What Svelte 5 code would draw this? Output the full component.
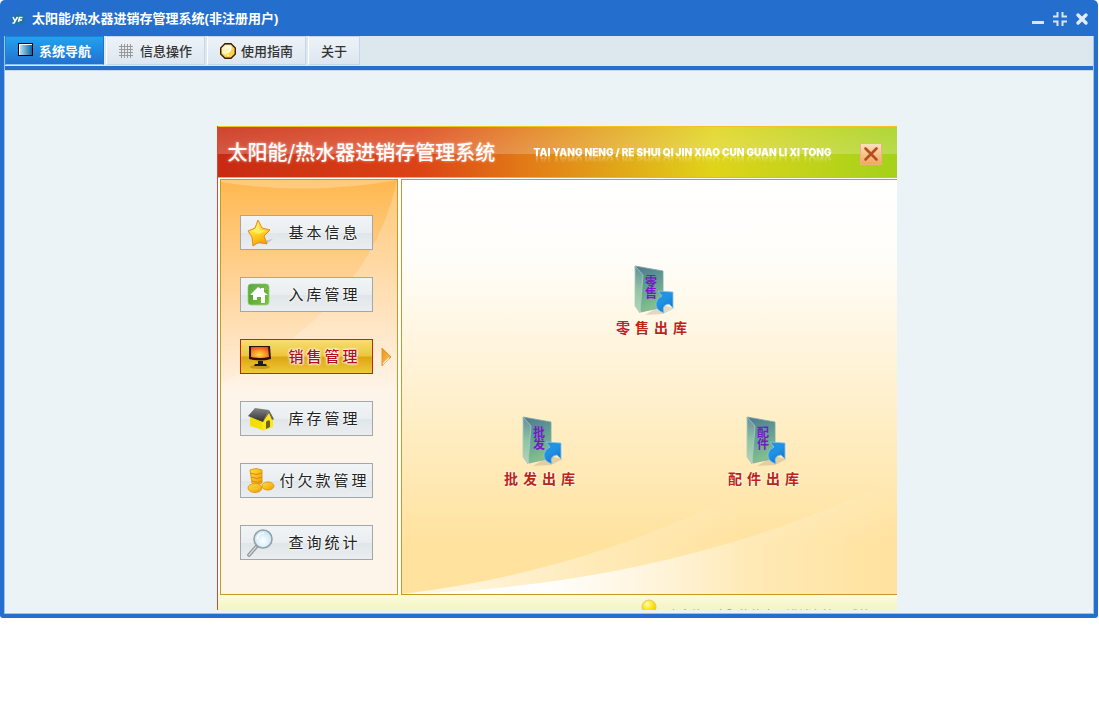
<script lang="ts">
	interface Tab {
		id: string;
		label: string;
		icon?: 'screen' | 'grid' | 'help';
	}

	interface MenuItem {
		id: string;
		label: string;
	}

	interface Shortcut {
		glyph: string[];
		label: string;
	}

	const tabs: Tab[] = [
		{ id: 'nav', label: '系统导航', icon: 'screen' },
		{ id: 'info', label: '信息操作', icon: 'grid' },
		{ id: 'guide', label: '使用指南', icon: 'help' },
		{ id: 'about', label: '关于' }
	];

	const menu: MenuItem[] = [
		{ id: 'star', label: '基本信息' },
		{ id: 'home', label: '入库管理' },
		{ id: 'monitor', label: '销售管理' },
		{ id: 'store', label: '库存管理' },
		{ id: 'coins', label: '付欠款管理' },
		{ id: 'search', label: '查询统计' }
	];

	const shortcuts: Shortcut[] = [
		{ glyph: ['零', '售'], label: '零售出库' },
		{ glyph: ['批', '发'], label: '批发出库' },
		{ glyph: ['配', '件'], label: '配件出库' }
	];

	let activeTab = $state('nav');
	let activeMenu = $state('monitor');
</script>

<!-- Shared gradients -->
<svg class="defs" width="0" height="0" aria-hidden="true">
	<defs>
		<linearGradient id="g-screen" x1="0" x2="1"><stop offset="0" stop-color="#b5dcf2" /><stop offset="1" stop-color="#0a659f" /></linearGradient>
		<linearGradient id="g-star" x1="0" y1="0" x2="0.4" y2="1"><stop offset="0" stop-color="#ffee50" /><stop offset="0.5" stop-color="#ffdf2a" /><stop offset="1" stop-color="#f6a800" /></linearGradient>
		<linearGradient id="g-home" x1="0" y1="0" x2="1" y2="1"><stop offset="0" stop-color="#46992c" /><stop offset="1" stop-color="#7cc63c" /></linearGradient>
		<radialGradient id="g-monitor" cx="0.45" cy="0.7" r="0.8"><stop offset="0" stop-color="#ffdc4a" /><stop offset="0.5" stop-color="#fb8f2c" /><stop offset="1" stop-color="#e8401c" /></radialGradient>
		<linearGradient id="g-roof" x1="0" y1="0" x2="0" y2="1"><stop offset="0" stop-color="#858585" /><stop offset="1" stop-color="#2f2f2f" /></linearGradient>
		<linearGradient id="g-coin" x1="0" y1="0" x2="1" y2="1"><stop offset="0" stop-color="#ffe23c" /><stop offset="1" stop-color="#f09a08" /></linearGradient>
		<radialGradient id="g-lens" cx="0.5" cy="0.6" r="0.6"><stop offset="0" stop-color="#ffffff" /><stop offset="1" stop-color="#bfe4f5" /></radialGradient>
		<linearGradient id="g-folder" x1="0" y1="0" x2="0.3" y2="1"><stop offset="0" stop-color="#52758f" /><stop offset="0.45" stop-color="#5c9a92" /><stop offset="1" stop-color="#83c08b" /></linearGradient>
		<linearGradient id="g-flap" x1="0" y1="0" x2="0" y2="1"><stop offset="0" stop-color="#668da0" /><stop offset="0.5" stop-color="#8fc4a4" /><stop offset="1" stop-color="#b4d5bd" /></linearGradient>
		<linearGradient id="g-arrow" x1="0" y1="0" x2="0.6" y2="1"><stop offset="0" stop-color="#2f8fd4" /><stop offset="0.5" stop-color="#1e93e4" /><stop offset="1" stop-color="#1976cc" /></linearGradient>
		<linearGradient id="g-pointer" x1="0" y1="0" x2="1" y2="1"><stop offset="0" stop-color="#e9901c" /><stop offset="1" stop-color="#ffc766" /></linearGradient>
		<linearGradient id="g-sweep1" x1="0" x2="1"><stop offset="0" stop-color="#fff" /><stop offset="0.28" stop-color="#fff" stop-opacity="0.95" /><stop offset="0.7" stop-color="#fff" stop-opacity="0.25" /><stop offset="1" stop-color="#fff" stop-opacity="0" /></linearGradient>
		<linearGradient id="g-sweep2" x1="0" x2="1"><stop offset="0" stop-color="#fff" stop-opacity="0.8" /><stop offset="0.4" stop-color="#fff" stop-opacity="0.25" /><stop offset="0.7" stop-color="#fff" stop-opacity="0" /></linearGradient>
		<radialGradient id="g-bulb" cx="0.4" cy="0.3" r="0.7"><stop offset="0" stop-color="#fffbc4" /><stop offset="0.5" stop-color="#ffe913" /><stop offset="1" stop-color="#f5c400" /></radialGradient>
		<radialGradient id="g-logo"><stop offset="0" stop-color="#1d7b8b" /><stop offset="0.6" stop-color="#1c74a0" /><stop offset="1" stop-color="#246fcb" /></radialGradient>
	</defs>
</svg>

<div class="window">
	<header class="titlebar">
		<svg width="18" height="18" viewBox="0 0 18 18" aria-hidden="true">
			<ellipse cx="9.500" cy="9.500" rx="8" ry="6.500" fill="url(#g-logo)" />
			<path d="M4 7l2 4M8.500 7l-3.500 6H3.500M9.500 12l1-4.500h3M10 10h3" fill="none" stroke="#fff" stroke-width="1.600" />
		</svg>
		<h1>太阳能/热水器进销存管理系统(非注册用户)</h1>
		<div class="controls">
			<button aria-label="最小化">
				<svg width="14" height="14" viewBox="0 0 14 14"><path d="M1 10.500h12" stroke="#d6e6f8" stroke-width="3" /></svg>
			</button>
			<button aria-label="还原">
				<svg width="16" height="16" viewBox="0 0 16 16"><path d="M5.500 1v4.500H1M10.500 1v4.500H15M5.500 15v-4.500H1M10.500 15v-4.500H15" fill="none" stroke="#d6e6f8" stroke-width="2" /></svg>
			</button>
			<button aria-label="关闭">
				<svg width="14" height="14" viewBox="0 0 14 14"><path d="M3 3l8 8M11 3l-8 8" stroke="#e2edfa" stroke-width="3.400" stroke-linecap="round" /></svg>
			</button>
		</div>
	</header>

	<div class="frame">
		<nav class="tabs">
			{#each tabs as tab}
				<button class:active={activeTab === tab.id} onclick={() => (activeTab = tab.id)}>
					{#if tab.icon === 'screen'}
						<svg width="16" height="16" viewBox="0 0 16 16"><rect x="0" y="0" width="15" height="13" fill="#000" /><rect x="1" y="1" width="13" height="11" fill="#fff" /><rect x="2" y="2" width="12" height="10" fill="url(#g-screen)" /></svg>
					{:else if tab.icon === 'grid'}
						<svg width="16" height="16" viewBox="0 0 16 16"><path d="M2.500 1v14M5.500 1v14M8.500 1v14M11.500 1v14M0 3.500h14M0 6.500h14M0 9.500h14M0 12.500h14" stroke="#999" /></svg>
					{:else if tab.icon === 'help'}
						<svg width="16" height="16" viewBox="0 0 16 16">
							<path d="M5 0.700h6L15.300 5v6L11 15.300H5L0.700 11V5z" fill="#ffd24a" stroke="#3c1c08" stroke-width="1.400" />
							<path d="M5 2h6l1 2-2 5-5 3-3-2V5z" fill="#fff2b4" />
							<path d="M5.500 6c0-3 5-3 5 0 0 2-2.500 1.800-2.500 4M8 11.500v1.500" fill="none" stroke="#fff" stroke-width="1.800" />
						</svg>
					{/if}
					<span>{tab.label}</span>
				</button>
			{/each}
		</nav>

		<main class="workspace">
			<section class="panel">
				<header class="banner">
					<h2>太阳能/热水器进销存管理系统</h2>
					<p>TAI YANG NENG / RE SHUI QI JIN XIAO CUN GUAN LI XI TONG</p>
					<button class="close" aria-label="关闭导航">
						<svg width="16" height="16" viewBox="0 0 16 16"><path d="M2.500 2.500l11 11M13.500 2.500l-11 11" stroke="#b54d1c" stroke-width="2.600" stroke-linecap="round" /></svg>
					</button>
				</header>

				<div class="columns">
					<aside class="sidebar">
						<svg class="shine" viewBox="0 0 176 414" preserveAspectRatio="none" aria-hidden="true">
							<path d="M0 0h176Q88 16 0 2z" fill="#fff" opacity="0.25" />
							<path d="M176 0Q150 125 0 204V414H176z" fill="#fff" opacity="0.22" />
						</svg>
						<ul>
							{#each menu as item}
								<li>
									<button class:active={activeMenu === item.id} onclick={() => (activeMenu = item.id)}>
										<svg width="28" height="28" viewBox="0 0 28 28" aria-hidden="true">
											{#if item.id === 'star'}
												<path d="M17 22l9-2-7 5H9z" fill="#aeb5b9" opacity="0.7" />
												<path d="M11 1l4 8 8 2-6 6 3 8-8-2-6 4-1-9-4-6 7-3z" fill="url(#g-star)" stroke="#ef8420" stroke-linejoin="round" />
												<path d="M11 4l2 7 7 1-8 3-8-3 5-2z" fill="#fff69a" opacity="0.6" />
											{:else if item.id === 'home'}
												<rect x="1" y="3" width="21" height="21" rx="3" fill="url(#g-home)" stroke="#9bd07c" stroke-width="0.800" />
												<path d="M2 14V6q0-2 2-2h16q1 0 1 2v3Q12 9 2 14z" fill="#fff" opacity="0.12" />
												<path d="M3 14l8-8 3 2V7h3v4l4 3h-3v8h-4v-6h-4v3H6v-5z" fill="#fff" />
											{:else if item.id === 'monitor'}
												<ellipse cx="13" cy="24" rx="10" ry="2" fill="#8c6a0c" opacity="0.4" />
												<path d="M2 3h21l1 13q-11 3-22 0z" fill="#2c140c" />
												<path d="M4 4h17l1 10q-9 2-18 0z" fill="url(#g-monitor)" />
												<path d="M11 18h5v3h3l1 2H7l1-2h3z" fill="#1c1c1c" />
											{:else if item.id === 'store'}
												<path d="M3 12l13 3v10L3 21z" fill="#f5df00" />
												<path d="M15 16l7-10 4 8v8l-11 4z" fill="#ffe71c" />
												<path d="M19 17q2-3 4-1v6l-4 2z" fill="#6b6420" />
												<path d="M1 11L8 3l14 2-6 12z" fill="url(#g-roof)" />
												<path d="M22 5l5 9-2 1-3-7-6 9z" fill="#666" />
											{:else if item.id === 'coins'}
												<path d="M3 3q6-3 12 0v13q-6 3-10 0z" fill="url(#g-coin)" stroke="#e59a12" />
												<path d="M3 6q6 3 12 0M4 10q6 3 11 0M5 14q6 3 10 0" fill="none" stroke="#d98a10" />
												<ellipse cx="21" cy="19" rx="6" ry="4" fill="url(#g-coin)" stroke="#e59a12" />
												<ellipse cx="8" cy="21" rx="7" ry="4.500" fill="url(#g-coin)" stroke="#e59a12" />
												<ellipse cx="8" cy="20" rx="4" ry="2" fill="none" stroke="#f7c83a" />
											{:else}
												<path d="M10 17l-8 9" stroke="#8b9094" stroke-width="3.600" stroke-linecap="round" />
												<path d="M9 18l-7 8" stroke="#d9dcdf" stroke-width="1.400" stroke-linecap="round" />
												<circle cx="16" cy="10" r="9" fill="url(#g-lens)" stroke="#94a0a7" stroke-width="1.600" />
												<path d="M10 10q1-6 7-6" fill="none" stroke="#fff" stroke-width="1.500" />
											{/if}
										</svg>
										<span>{item.label}</span>
									</button>
									{#if activeMenu === item.id}
										<svg width="11" height="20" viewBox="0 0 11 20" aria-hidden="true"><path d="M1 1l9 9-9 9z" fill="url(#g-pointer)" stroke="#e59a2c" /><path d="M2 17l6-6" stroke="#fff" stroke-width="1.200" opacity="0.8" /></svg>
									{/if}
								</li>
							{/each}
						</ul>
					</aside>

					<div class="board">
						<svg class="sweep" viewBox="0 0 495 130" preserveAspectRatio="none" aria-hidden="true">
							<path d="M0 130Q190 108 370 14H495V130z" fill="url(#g-sweep2)" />
							<path d="M0 130Q270 122 495 15V130z" fill="url(#g-sweep1)" />
						</svg>
						<div class="shortcuts">
							{#each shortcuts as item}
								<button>
									<svg width="44" height="52" viewBox="1 0 44 52" aria-hidden="true">
										<path d="M30 40l14 3-12 6-18 1z" fill="#a99e78" opacity="0.35" />
										<path d="M4 1l28 5v36L10 47z" fill="url(#g-folder)" stroke="#7ba5a4" stroke-width="0.800" />
										<path d="M4 1l8 9-3 38-5-7z" fill="url(#g-flap)" stroke="#a7cdbb" stroke-width="0.800" />
										<text x="20" y="21" text-anchor="middle">{item.glyph[0]}</text>
										<text x="20" y="33" text-anchor="middle">{item.glyph[1]}</text>
										<path d="M27 26l15 1v16l-4-4q-8 1-5 9-9-3-8-10 1-5 6-7z" fill="url(#g-arrow)" stroke="#86c5ef" stroke-width="0.800" />
									</svg>
									<span>{item.label}</span>
								</button>
							{/each}
						</div>
					</div>
				</div>

				<footer class="tips">
					<svg width="16" height="16" viewBox="0 0 16 16" aria-hidden="true"><circle cx="8" cy="8" r="7" fill="url(#g-bulb)" stroke="#e8c668" /></svg>
					<span>欢迎使用太阳能热水器进销存管理系统</span>
				</footer>
			</section>
		</main>
	</div>
</div>

<style>
	:global(body) {
		margin: 0;
		background: #fff;
		font-family: 'Liberation Sans', 'Noto Sans CJK SC', sans-serif;
	}

	button {
		margin: 0;
		padding: 0;
		border: 0;
		background: none;
		font: inherit;
		cursor: pointer;
	}

	svg {
		display: block;
		flex: none;
	}

	h1,
	h2,
	p,
	ul {
		margin: 0;
		padding: 0;
		list-style: none;
	}

	.defs {
		position: absolute;
	}

	.window {
		box-sizing: border-box;
		margin-right: 1px;
		padding: 0 4px 4px;
		border-radius: 5px 5px 3px 3px;
		background: #246fcd;
	}

	.titlebar {
		display: flex;
		align-items: center;
		height: 36px;
		padding: 2px 5px 0;
		box-sizing: border-box;
	}

	h1 {
		margin-left: 5px;
		color: #fff;
		font-size: 13px;
		line-height: 20px;
		font-weight: 700;
	}

	.controls {
		display: flex;
		align-items: center;
		gap: 7px;
		margin-left: auto;
	}

	.frame {
		border: 1px solid #9dc3ea;
		border-top: 0;
		background: #ebf3f7;
	}

	.tabs {
		display: flex;
		gap: 2px;
		height: 30px;
		border-bottom: 4px solid #246fcd;
		background: #dde8ee;
	}

	.tabs button {
		display: flex;
		align-items: center;
		gap: 5px;
		box-sizing: border-box;
		height: 29px;
		padding: 0 12px;
		border: 1px solid #c3d7e9;
		border-left-color: #fff;
		background: linear-gradient(#edf3f7, #dde7f0);
		color: #333;
		font-size: 13px;
		font-weight: 500;
	}

	.tabs button.active {
		border-color: #1c83db #1c74cc #8cc2f3 #1c83db;
		background: linear-gradient(#21a2ee, #2370cf);
		color: #fff;
		font-weight: 700;
	}

	.workspace {
		display: flex;
		justify-content: center;
		padding: 55px 0 3px 15px;
		border-top: 1px solid #c5d9ea;
	}

	.panel {
		flex: none;
		box-sizing: border-box;
		width: 680px;
		border-left: 1px solid #d34a30;
		background: #fff;
	}

	.banner {
		display: flex;
		align-items: center;
		height: 52px;
		box-sizing: border-box;
		padding: 0 15px 0 10px;
		border-top: 1px solid #f0c41c;
		border-bottom: 1px solid #b3b6ae;
		background:
			linear-gradient(rgba(255, 255, 255, 0.12), rgba(255, 255, 255, 0.22) 54%, transparent 54%),
			linear-gradient(90deg, #c82a12, #dc4416 30%, #e27d17 46%, #e0d41a 73%, #a4d11a);
	}

	h2 {
		color: #fff;
		font-family: 'Noto Sans CJK SC', sans-serif;
		font-size: 20px;
		line-height: 28px;
		font-weight: 500;
		text-shadow: 0 0 3px rgba(255, 200, 190, 0.8);
	}

	.banner p {
		margin-left: auto;
		color: #fff;
		font-family: Inter, sans-serif;
		font-size: 10px;
		line-height: 10px;
		font-weight: 900;
		-webkit-box-reflect: below -2px linear-gradient(transparent 20%, rgba(0, 0, 0, 0.4));
	}

	.close {
		display: grid;
		place-items: center;
		width: 22px;
		height: 22px;
		margin-left: 28px;
		margin-top: 4px;
		border: 1px solid #eeb183;
		background: linear-gradient(#fbe0bd, #f6a560);
	}

	.columns {
		display: grid;
		grid-template-columns: 178px 1fr;
		gap: 3px;
		padding: 1px 0 0 2px;
	}

	.sidebar {
		position: relative;
		box-sizing: border-box;
		padding: 35px 0 34px 19px;
		border: 1px solid #c39a24;
		background: linear-gradient(#ffb850, #ffe2bd 38%, #fef3e5 52%);
	}

	.shine {
		position: absolute;
		inset: 0;
		width: 100%;
		height: 100%;
	}

	.sidebar ul {
		position: relative;
		display: grid;
		gap: 27px;
	}

	.sidebar li {
		display: flex;
		align-items: center;
		gap: 8px;
	}

	.sidebar button {
		display: flex;
		align-items: center;
		box-sizing: border-box;
		width: 133px;
		height: 35px;
		padding-left: 6px;
		border: 1px solid #a3a7a9;
		background: linear-gradient(#f1f4f6, #eaeef1 50%, #dfe5e9 51%, #ebeef0);
		color: #222;
		font-size: 15px;
		line-height: 20px;
		letter-spacing: 3px;
		text-shadow: 0 0 2px #fff, 0 0 3px #fff;
	}

	.sidebar button span {
		flex: 1;
		padding-left: 3px;
		text-align: center;
		white-space: nowrap;
	}

	.sidebar button.active {
		border-color: #b9281c;
		background: linear-gradient(#f6df70, #edc53c 49%, #dca610 51%, #efc83c);
		color: #b50d1c;
		font-weight: 500;
		text-shadow: 0 0 2px #fff, 0 0 2px #fff, 0 0 3px #fff, 0 0 3px #fff;
	}

	.board {
		position: relative;
		display: flex;
		justify-content: center;
		border: 1px solid #c39a24;
		border-right: 0;
		background: linear-gradient(#fff, #fffdf8 20%, #ffe29e 88%, #ffe29e);
	}

	.sweep {
		position: absolute;
		left: 0;
		bottom: 0;
		width: 100%;
		height: 130px;
	}

	.shortcuts {
		position: relative;
		display: grid;
		grid-template-columns: 224px 224px;
		align-content: start;
		justify-items: center;
		row-gap: 78px;
		padding: 85px 0 0 10px;
	}

	.shortcuts button {
		display: grid;
		justify-items: center;
		gap: 1px;
	}

	.shortcuts button:first-child {
		grid-column: 1 / -1;
	}

	.shortcuts span {
		color: #bd2413;
		font-size: 14px;
		line-height: 20px;
		font-weight: 700;
		letter-spacing: 5px;
		text-shadow: 0 0 2px #fff, 0 0 3px #fff;
	}

	.shortcuts text {
		fill: #7a17c9;
		font-size: 12px;
		font-weight: 700;
	}

	.tips {
		display: flex;
		align-items: flex-start;
		gap: 10px;
		box-sizing: border-box;
		height: 15px;
		padding: 4px 0 0 423px;
		overflow: hidden;
		background: linear-gradient(#fbfbdc, #f4f4c4);
		color: #999;
		font-size: 12px;
		line-height: 34px;
		white-space: nowrap;
	}
</style>
